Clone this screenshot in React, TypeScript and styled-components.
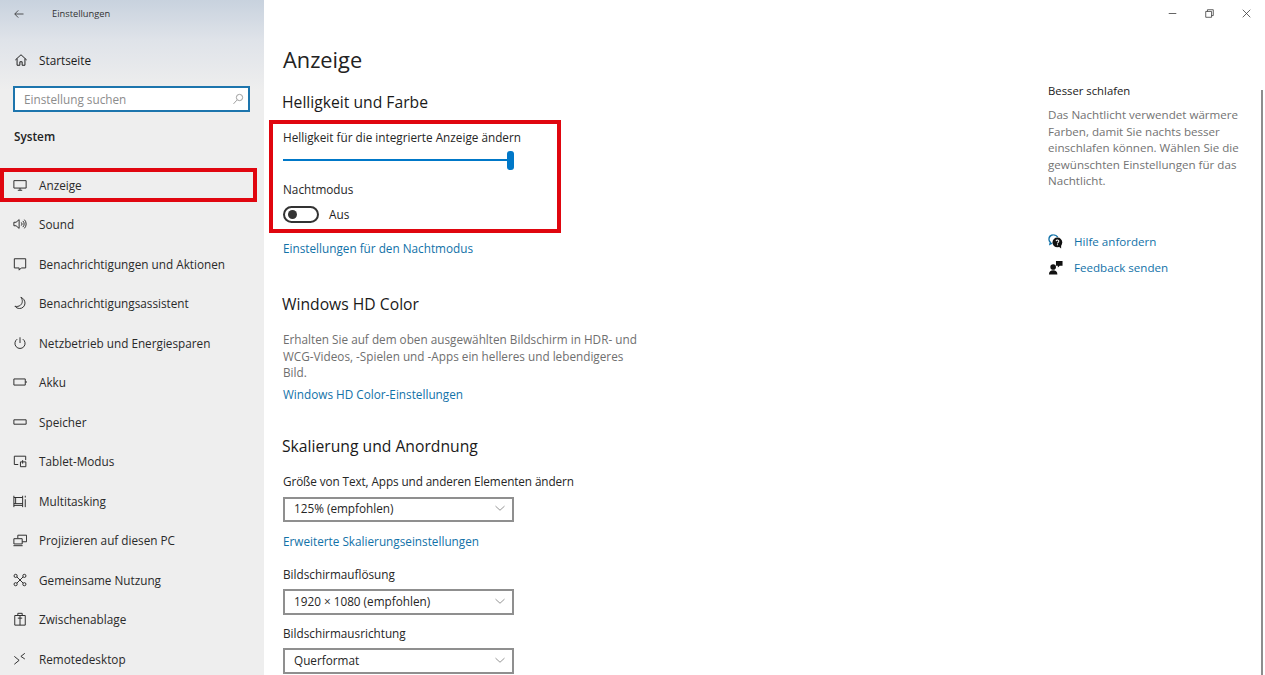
import React from 'react'
import styled, { createGlobalStyle } from 'styled-components'

const RED = '#e0060f'
const ACCENT = '#0078c8'
const LINK = '#1272a8'

const GlobalStyle = createGlobalStyle`
  html, body {
    margin: 0;
    padding: 0;
    background: #fff;
  }
  body {
    font-family: "Open Sans", "Noto Sans", "Liberation Sans", sans-serif;
    font-size: 11.75px;
    color: #1c1c1c;
  }
  *, *::before, *::after {
    box-sizing: border-box;
  }
`

const Window = styled.div`
  display: grid;
  grid-template-columns: 264px 1fr;
  width: 1265px;
  height: 675px;
  overflow: hidden;
`

const Sidebar = styled.aside`
  background: linear-gradient(#c8d2de 0, #dfe3e9 40px, #eeeeee 90px, #eeeeee 100%);
  overflow: hidden;
`

const SideHeader = styled.div`
  display: flex;
  align-items: center;
  height: 27px;
  padding-left: 13px;
  font-size: 9.3px;
  color: #333;
  span {
    margin-left: 27px;
  }
`

const HomeRow = styled.div`
  display: flex;
  align-items: center;
  gap: 11px;
  height: 24px;
  margin-top: 21px;
  padding-left: 14px;
`

const SearchBox = styled.div`
  display: flex;
  align-items: center;
  justify-content: space-between;
  width: 237px;
  height: 26px;
  margin: 14px 0 0 13px;
  padding: 0 4px 1px 9px;
  border: 2px solid #1d75ad;
  background: #fff;
  color: #8c8c8c;
`

const SectionTitle = styled.div`
  margin: 15px 0 0 14px;
  height: 18px;
  line-height: 18px;
  font-weight: 600;
  color: #222;
`

const NavList = styled.nav`
  margin-top: 20px;
`

const NavRow = styled.div<{ $marked?: boolean }>`
  position: relative;
  display: flex;
  align-items: center;
  gap: 12px;
  height: 39.5px;
  padding-left: 13px;
  color: #2a2a2a;
  ${(p) =>
    p.$marked &&
    `
    &::after {
      content: '';
      position: absolute;
      left: 0;
      top: 3px;
      width: 257px;
      height: 34px;
      border: 4px solid ${RED};
    }
  `}
`

const Main = styled.main`
  position: relative;
  display: flex;
  flex-direction: column;
`

const TitleBar = styled.div`
  display: flex;
  justify-content: flex-end;
  align-items: center;
  gap: 26px;
  height: 27px;
  padding-right: 13px;
  color: #333;
`

const Body = styled.div`
  display: grid;
  grid-template-columns: 1fr 217px;
  flex: 1;
`

const Content = styled.section`
  padding: 19px 0 0 19px;
`

const PageTitle = styled.h1`
  margin: 0;
  height: 28px;
  line-height: 28px;
  font-size: 21.8px;
  font-weight: 400;
  color: #222;
`

const Heading = styled.h2<{ $top: number }>`
  margin: ${(p) => p.$top}px 0 0 -1px;
  height: 22px;
  line-height: 22px;
  font-size: 15.7px;
  font-weight: 400;
  color: #1a1a1a;
`

const Label = styled.div<{ $top: number; $tight?: boolean }>`
  margin-top: ${(p) => p.$top}px;
  height: 18px;
  line-height: 16px;
  letter-spacing: ${(p) => (p.$tight ? '-0.1px' : 'normal')};
  color: #262626;
`

const TextLink = styled.a<{ $top: number }>`
  display: block;
  margin-top: ${(p) => p.$top}px;
  height: 18px;
  line-height: 16px;
  color: ${LINK};
`

const MarkedBox = styled.div`
  width: 292px;
  height: 113px;
  margin: 7px 0 0 -14px;
  padding: 0 0 0 10px;
  border: 4px solid ${RED};
`

const SliderTrack = styled.div`
  position: relative;
  display: flex;
  align-items: center;
  width: 231px;
  height: 18px;
  margin-top: 4px;
  &::before {
    content: '';
    width: 100%;
    height: 2px;
    background: ${ACCENT};
  }
`

const SliderThumb = styled.div`
  position: absolute;
  right: 0;
  top: 0;
  width: 7px;
  height: 19px;
  border-radius: 3px;
  background: ${ACCENT};
`

const ToggleRow = styled.div`
  display: flex;
  align-items: center;
  gap: 10px;
  height: 18px;
  margin-top: 6px;
`

const Toggle = styled.div`
  display: flex;
  align-items: center;
  width: 36px;
  height: 17px;
  padding-left: 3px;
  border: 2px solid #333;
  border-radius: 9px;
  &::before {
    content: '';
    width: 9px;
    height: 9px;
    border-radius: 50%;
    background: #333;
  }
`

const Paragraph = styled.p`
  width: 365px;
  margin: 16px 0 0;
  line-height: 16.5px;
  color: #6f6f6f;
`

const Select = styled.div<{ $top: number; $height: number }>`
  display: flex;
  align-items: center;
  justify-content: space-between;
  width: 231px;
  height: ${(p) => p.$height}px;
  margin-top: ${(p) => p.$top}px;
  padding: 0 6px 2px 9px;
  border: 2px solid #8f8f8f;
  color: #262626;
  svg {
    color: #808080;
  }
`

const Aside = styled.aside`
  padding: 55px 0 0 0;
`

const AsideTitle = styled.div`
  height: 18px;
  line-height: 18px;
  font-size: 11.3px;
  color: #1a1a1a;
`

const AsideText = styled.p`
  width: 197px;
  margin: 7px 0 0;
  font-size: 11.6px;
  line-height: 16.5px;
  color: #737373;
`

const HelpList = styled.div`
  display: flex;
  flex-direction: column;
  gap: 8px;
  margin-top: 43px;
`

const HelpRow = styled.a`
  display: flex;
  align-items: center;
  gap: 11px;
  height: 18px;
  font-size: 11.6px;
  color: ${LINK};
`

const ScrollLine = styled.div`
  position: absolute;
  right: 2px;
  top: 90px;
  bottom: 0;
  width: 2px;
  background: #8d8d8d;
`

const Svg = styled.svg.attrs({ viewBox: '0 0 16 16', fill: 'none', stroke: 'currentColor' })<{ $size?: number }>`
  display: block;
  flex: none;
  width: ${(p) => p.$size ?? 14}px;
  height: ${(p) => p.$size ?? 14}px;
  stroke-width: 1.1;
`

const ICONS: Record<string, React.ReactNode> = {
  back: <path d="M14 8H2.5M7 3.2 2.3 8 7 12.8" />,
  home: <path d="M1.5 8 8 2l6.5 6M3.5 6.5V14h3.2v-4h2.6v4h3.2V6.5" />,
  search: <path d="M6.5 9.5 2 14.5M10 1.8a4.2 4.2 0 1 1 0 8.4 4.2 4.2 0 0 1 0-8.4Z" />,
  display: <path d="M1 3h14v8.5H1ZM8 11.5V14M5.5 14h5" />,
  sound: (
    <path d="M1 6v4h2.5L7 13V3L3.5 6ZM9.5 6.2a2.5 2.5 0 0 1 0 3.6M11.3 4.5a5 5 0 0 1 0 7M13 3a7.2 7.2 0 0 1 0 10" />
  ),
  notify: <path d="M1.5 2h13v10.5H9.5L7 15v-2.5H1.5Z" />,
  moon: <path d="M9 1.5c2.5 3 2 7-.5 9-1.8 1.4-4 1.8-6.3 1.2 1.3 1.6 3.2 2.6 5.3 2.6a6.2 6.2 0 0 0 6.2-6.2c0-3-2-5.6-4.7-6.6Z" />,
  power: <path d="M8 1.5v6.5M4.8 3.6a5.8 5.8 0 1 0 6.4 0" />,
  battery: <path d="M1 4.5h13v7H1ZM15 7v2" />,
  storage: <path d="M1 5.5h14v5H1Z" />,
  tablet: (
    <path d="M6 12H1.5V2.5h13V7M8.5 9h6.2v5.5H8.5ZM11 7v4" />
  ),
  multi: <path d="M1 2v13M1 4h10M1 11h10M3 4v7M1 13h10M11 2v13M14 2v2M14 6v9" />,
  project: <path d="M5.5 6V2.5h10v7.5h-5M1 6.5h9.5v6H1ZM0.5 14.5h10.5" />,
  share: (
    <path d="M4.5 4.5l7 7M11.5 4.5l-7 7M3 1.5a1.8 1.8 0 1 1 0 3.6 1.8 1.8 0 0 1 0-3.6ZM13 1.5a1.8 1.8 0 1 1 0 3.6 1.8 1.8 0 0 1 0-3.6ZM3 11a1.8 1.8 0 1 1 0 3.6A1.8 1.8 0 0 1 3 11ZM13 11a1.8 1.8 0 1 1 0 3.6 1.8 1.8 0 0 1 0-3.6Z" />
  ),
  clipboard: <path d="M2 4h12v11H2ZM5.5 4V1.5h5V4M8 4v11M5.5 7h5" />,
  remote: <path d="M1.5 5 7 9.5l-5.5 4.5M13.5 1.5 9 5l4.5 3" />,
  chevron: <path d="M2 5.5 8 11l6-5.5" />,
  minimize: <path d="M2.5 8h11" />,
  maximize: <path d="M2.5 5h8.5v8.5H2.5ZM5 5V2.5h8.5V11H11" />,
  close: <path d="M2.5 2.5l11 11M13.5 2.5l-11 11" />,
}

const Icon: React.FC<{ name: string; size?: number }> = ({ name, size }) => <Svg $size={size}>{ICONS[name]}</Svg>

const HelpIcon = () => (
  <Svg $size={15}>
    <path d="M6 1C3 1 1 3 1 5.5c0 1.3.6 2.4 1.5 3.2L2 11l2.5-1.3" strokeWidth={1.4} />
    <path d="M6 1c2 0 3.5 1 4.4 2.4" strokeWidth={1.4} />
    <circle cx="10" cy="9" r="5.2" fill="#111" stroke="none" />
    <path d="M11 13l3 2.5V11Z" fill="#111" stroke="none" />
    <path d="M8.6 7.6c.3-1.6 3-1.5 2.9.2 0 1-1.4 1.1-1.4 2.2M10.1 11v1" stroke="#fff" strokeWidth={1.1} />
  </Svg>
)

const FeedbackIcon = () => (
  <Svg $size={15}>
    <circle cx="5.5" cy="7.5" r="3" fill="#111" stroke="none" />
    <path d="M1 15.5c0-3 2-4.5 4.5-4.5s4.5 1.5 4.5 4.5Z" fill="#111" stroke="none" />
    <path d="M8.5 1h7v5h-3l-2 2V6h-2Z" fill="#111" stroke="none" />
  </Svg>
)

const NAV_ITEMS = [
  { icon: 'display', label: 'Anzeige', marked: true },
  { icon: 'sound', label: 'Sound' },
  { icon: 'notify', label: 'Benachrichtigungen und Aktionen' },
  { icon: 'moon', label: 'Benachrichtigungsassistent' },
  { icon: 'power', label: 'Netzbetrieb und Energiesparen' },
  { icon: 'battery', label: 'Akku' },
  { icon: 'storage', label: 'Speicher' },
  { icon: 'tablet', label: 'Tablet-Modus' },
  { icon: 'multi', label: 'Multitasking' },
  { icon: 'project', label: 'Projizieren auf diesen PC' },
  { icon: 'share', label: 'Gemeinsame Nutzung' },
  { icon: 'clipboard', label: 'Zwischenablage' },
  { icon: 'remote', label: 'Remotedesktop' },
]

const App: React.FC = () => (
  <Window>
    <GlobalStyle />
    <Sidebar>
      <SideHeader>
        <Icon name="back" size={12} />
        <span>Einstellungen</span>
      </SideHeader>
      <HomeRow>
        <Icon name="home" />
        Startseite
      </HomeRow>
      <SearchBox>
        Einstellung suchen
        <Icon name="search" size={12} />
      </SearchBox>
      <SectionTitle>System</SectionTitle>
      <NavList>
        {NAV_ITEMS.map((item) => (
          <NavRow key={item.label} $marked={item.marked}>
            <Icon name={item.icon} />
            {item.label}
          </NavRow>
        ))}
      </NavList>
    </Sidebar>
    <Main>
      <TitleBar>
        <Icon name="minimize" size={11} />
        <Icon name="maximize" size={11} />
        <Icon name="close" size={11} />
      </TitleBar>
      <Body>
        <Content>
          <PageTitle>Anzeige</PageTitle>
          <Heading $top={17}>Helligkeit und Farbe</Heading>
          <MarkedBox>
            <Label $top={5}>Helligkeit für die integrierte Anzeige ändern</Label>
            <SliderTrack>
              <SliderThumb />
            </SliderTrack>
            <Label $top={12}>Nachtmodus</Label>
            <ToggleRow>
              <Toggle />
              Aus
            </ToggleRow>
          </MarkedBox>
          <TextLink $top={7}>Einstellungen für den Nachtmodus</TextLink>
          <Heading $top={35}>Windows HD Color</Heading>
          <Paragraph>
            Erhalten Sie auf dem oben ausgewählten Bildschirm in HDR- und WCG-Videos, -Spielen und -Apps ein helleres
            und lebendigeres Bild.
          </Paragraph>
          <TextLink $top={5}>Windows HD Color-Einstellungen</TextLink>
          <Heading $top={31}>Skalierung und Anordnung</Heading>
          <Label $top={16} $tight>
            Größe von Text, Apps und anderen Elementen ändern
          </Label>
          <Select $top={6} $height={25}>
            125% (empfohlen)
            <Icon name="chevron" size={12} />
          </Select>
          <TextLink $top={11}>Erweiterte Skalierungseinstellungen</TextLink>
          <Label $top={15}>Bildschirmauflösung</Label>
          <Select $top={5} $height={26}>
            1920 × 1080 (empfohlen)
            <Icon name="chevron" size={12} />
          </Select>
          <Label $top={10}>Bildschirmausrichtung</Label>
          <Select $top={5} $height={26}>
            Querformat
            <Icon name="chevron" size={12} />
          </Select>
        </Content>
        <Aside>
          <AsideTitle>Besser schlafen</AsideTitle>
          <AsideText>
            Das Nachtlicht verwendet wärmere Farben, damit Sie nachts besser einschlafen können. Wählen Sie die
            gewünschten Einstellungen für das Nachtlicht.
          </AsideText>
          <HelpList>
            <HelpRow>
              <HelpIcon />
              Hilfe anfordern
            </HelpRow>
            <HelpRow>
              <FeedbackIcon />
              Feedback senden
            </HelpRow>
          </HelpList>
        </Aside>
      </Body>
      <ScrollLine />
    </Main>
  </Window>
)

export default App
